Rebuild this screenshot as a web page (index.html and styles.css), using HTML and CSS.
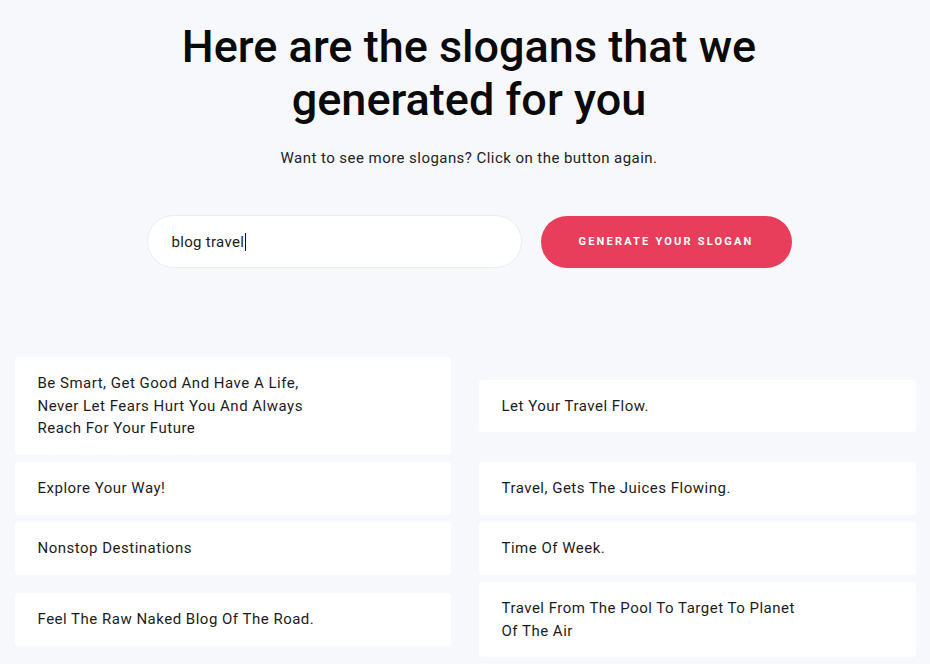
FILE: index.html
```html
<!DOCTYPE html>
<html>
<head>
<meta charset="utf-8">
<link rel="stylesheet" href="styles.css">
</head>
<body>
<main class="page">
  <section class="hero">
    <h1 class="title">Here are the slogans that we<br>generated for you</h1>
    <p class="subtitle">Want to see more slogans? Click on the button again.</p>
    <form class="gen-form">
      <div class="field"><span class="field-text">blog travel</span><span class="caret"></span></div>
      <button type="button" class="gen-btn">GENERATE YOUR SLOGAN</button>
    </form>
  </section>
  <section class="grid">
    <div class="card">Be Smart, Get Good And Have A Life,<br>Never Let Fears Hurt You And Always<br>Reach For Your Future</div>
    <div class="card">Let Your Travel Flow.</div>
    <div class="card">Explore Your Way!</div>
    <div class="card">Travel, Gets The Juices Flowing.</div>
    <div class="card">Nonstop Destinations</div>
    <div class="card">Time Of Week.</div>
    <div class="card">Feel The Raw Naked Blog Of The Road.</div>
    <div class="card">Travel From The Pool To Target To Planet<br>Of The Air</div>
  </section>
</main>
</body>
</html>
```

FILE: styles.css
```css
html, body {
  margin: 0;
  padding: 0;
  background: #f7f8fc;
  font-family: Roboto, "Liberation Sans", sans-serif;
  color: #1c1c1c;
}
.page {
  width: 901px;
  margin: 0 auto;
  padding-top: 20px;
}
.hero {
  display: flex;
  flex-direction: column;
  align-items: center;
  padding-left: 8px;
}
.title {
  margin: 0;
  font-size: 45px;
  font-weight: 500;
  line-height: 53px;
  text-align: center;
  color: #0a0a0a;
}
.subtitle {
  margin: 21px 0 0;
  font-size: 15px;
  line-height: 22px;
  letter-spacing: 0.45px;
  color: #222;
}
.gen-form {
  margin-top: 46px;
  display: flex;
  gap: 19px;
  align-items: center;
}
.field {
  box-sizing: border-box;
  width: 375px;
  height: 53px;
  background: #fff;
  border: 1px solid #ebecef;
  border-radius: 27px;
  padding: 0 24px;
  display: flex;
  align-items: center;
  font-size: 15px;
  letter-spacing: 0.3px;
  color: #1c1c1c;
}
.caret {
  display: inline-block;
  width: 1px;
  height: 18px;
  background: #111;
  margin-left: 1px;
}
.gen-btn {
  width: 251px;
  height: 52px;
  border: none;
  border-radius: 26px;
  background: #e83e5c;
  color: #fff;
  font-family: Roboto, "Liberation Sans", sans-serif;
  font-size: 11px;
  font-weight: 700;
  letter-spacing: 2.2px;
  padding: 0;
}
.grid {
  margin-top: 89px;
  display: grid;
  grid-template-columns: 436px 437px;
  column-gap: 28px;
  row-gap: 7.5px;
  align-items: center;
}
.card {
  background: #fff;
  border-radius: 4px;
  padding: 15px 23px;
  font-size: 15px;
  line-height: 22.5px;
  letter-spacing: 0.5px;
  color: #1c1c1c;
}
```
